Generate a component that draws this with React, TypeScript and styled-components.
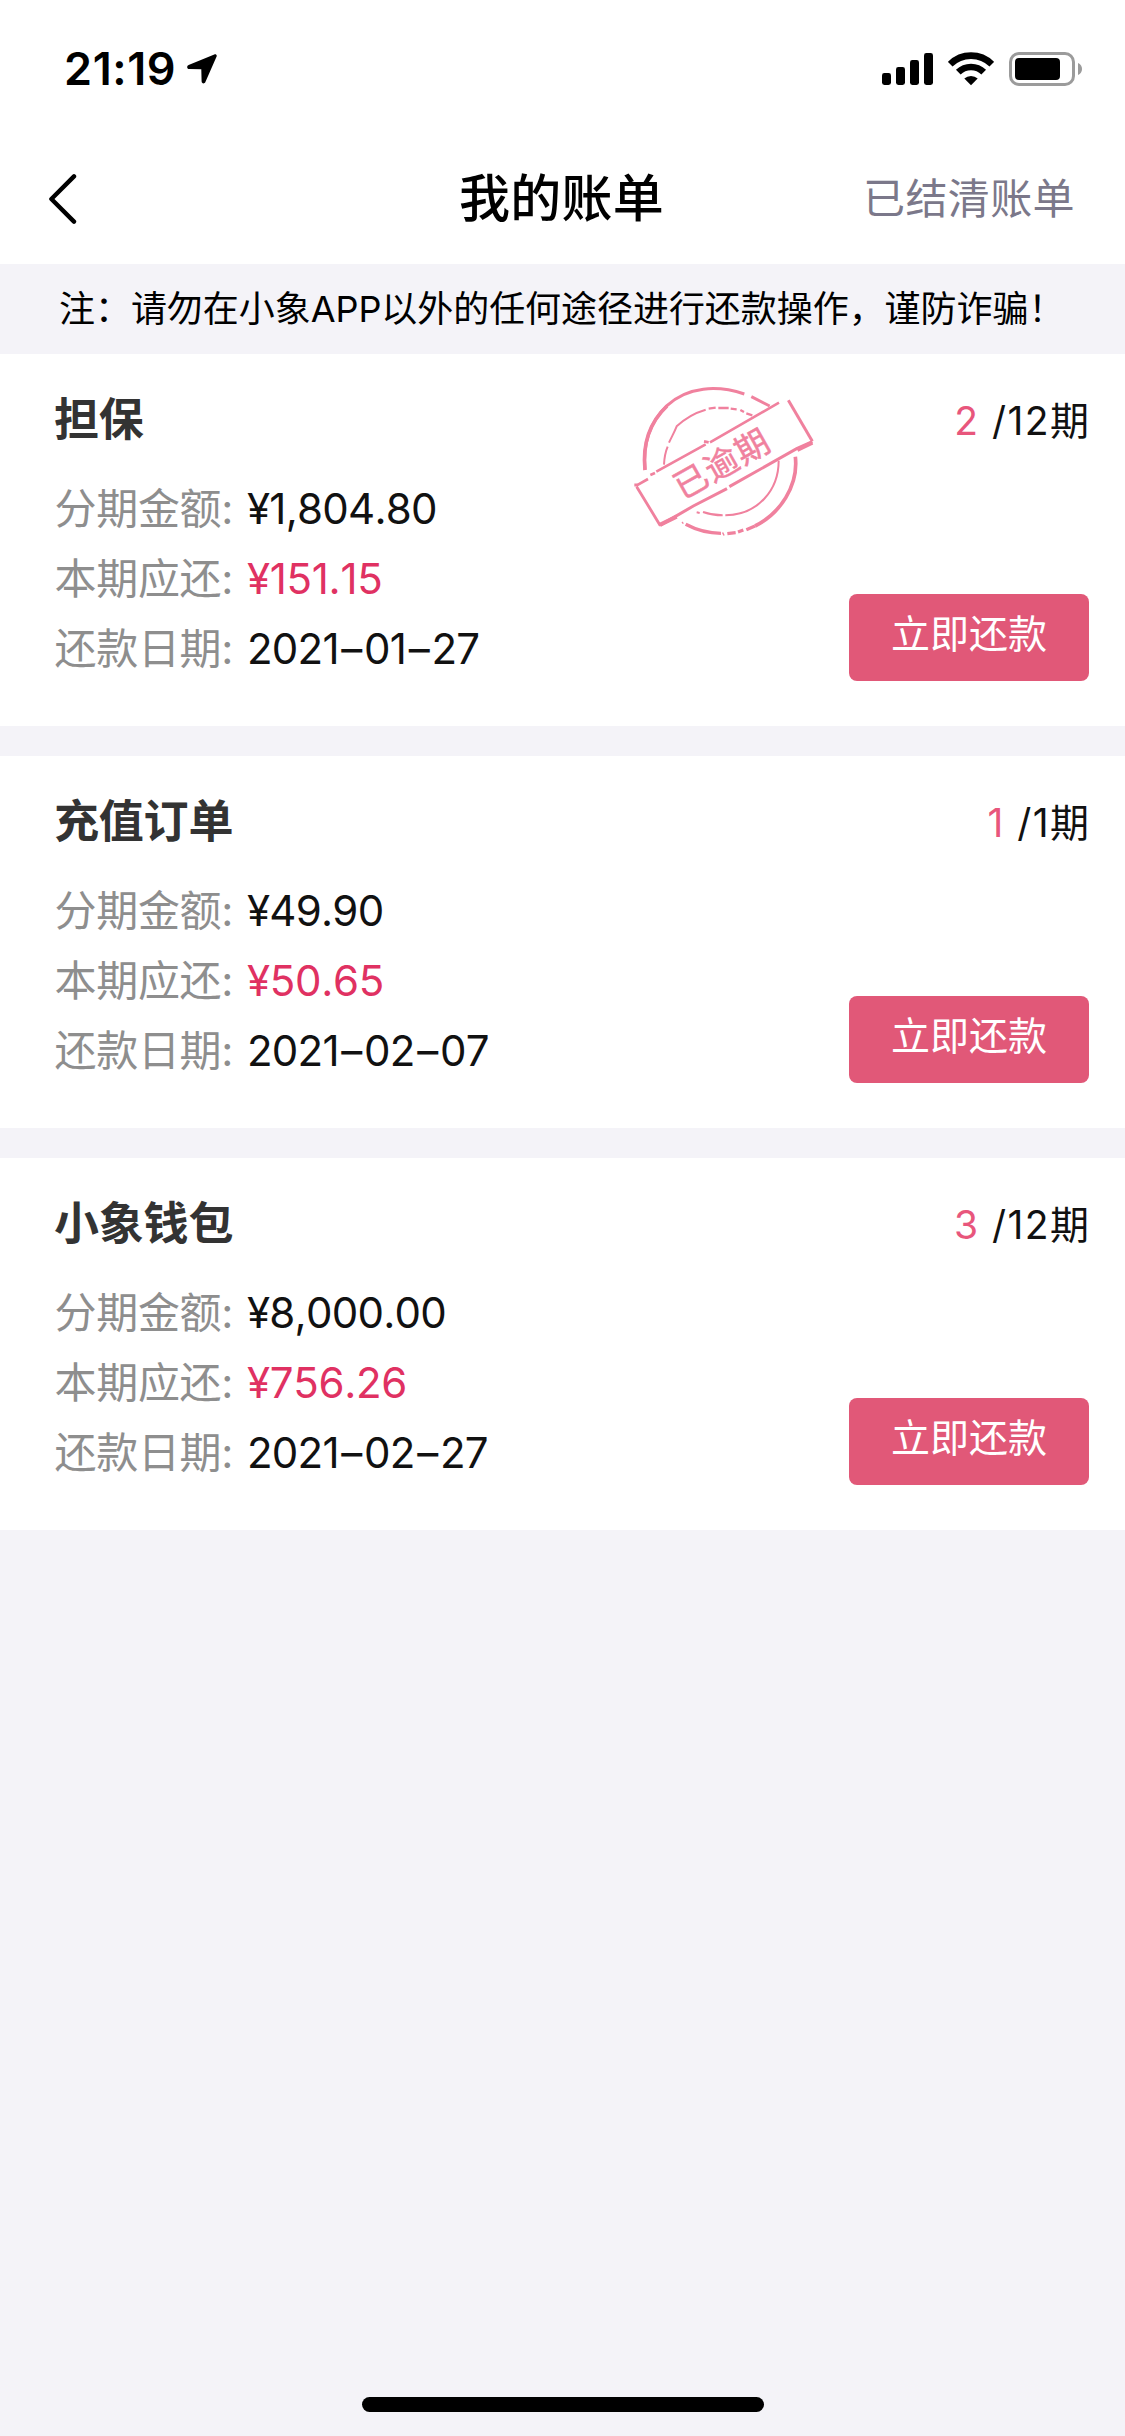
import React from "react";
import styled, { createGlobalStyle } from "styled-components";

const GlobalStyle = createGlobalStyle`
  * { box-sizing: border-box; }
  body {
    margin: 0;
    background: #f4f3f8;
    font-family: Inter, "Noto Sans CJK SC", sans-serif;
    color: #111;
  }
  button { font-family: inherit; border: 0; background: none; padding: 0; margin: 0; cursor: pointer; }
`;

const Screen = styled.div`
  width: 1125px;
  height: 2436px;
  display: flex;
  flex-direction: column;
  background: #f4f3f8;
  overflow: hidden;
  white-space: nowrap;
`;

const StatusBar = styled.div`
  height: 132px;
  padding: 5px 42px 0 64px;
  display: flex;
  align-items: center;
  justify-content: space-between;
  background: #fff;
`;

const Clock = styled.div`
  display: flex;
  align-items: center;
  gap: 11px;
  font-size: 45px;
  font-weight: 600;
  font-kerning: none;
  letter-spacing: 0.6px;
  color: #000;
`;

const StatusIcons = styled.div`
  display: flex;
  align-items: center;
  gap: 15px;
`;

const NavBar = styled.header`
  height: 132px;
  padding: 2px 50px 0 48px;
  display: grid;
  grid-template-columns: 1fr auto 1fr;
  align-items: center;
  background: #fff;
`;

const BackButton = styled.button`
  display: flex;
  justify-self: start;
`;

const PageTitle = styled.h1`
  margin: 0;
  font-size: 51px;
  font-weight: 500;
  line-height: 72px;
  letter-spacing: 0.3px;
  color: #000;
`;

const SettledLink = styled.button`
  justify-self: end;
  font-size: 42px;
  line-height: 60px;
  letter-spacing: 0.4px;
  color: #7b788a;
`;

const Notice = styled.div`
  height: 90px;
  padding-left: 59px;
  font-size: 36px;
  line-height: 90px;
  letter-spacing: -0.05px;
  color: #000;
`;

const BillList = styled.main`
  display: flex;
  flex-direction: column;
  gap: 30px;
`;

const Card = styled.section`
  position: relative;
  height: 372px;
  padding: 31px 36px 45px 54px;
  display: flex;
  justify-content: space-between;
  background: #fff;
`;

const Details = styled.div`
  display: flex;
  flex-direction: column;
`;

const CardTitle = styled.h2`
  margin: 0 0 19px;
  font-size: 45px;
  font-weight: 700;
  line-height: 70px;
  letter-spacing: -0.2px;
  color: #333;
`;

const Field = styled.div`
  display: flex;
  height: 70.5px;
  font-size: 42px;
  line-height: 70px;
`;

const FieldLabel = styled.span`
  width: 193px;
  padding-left: 0.5px;
  letter-spacing: -0.3px;
  color: #8e8e8e;
`;

const FieldValue = styled.span<{ $due?: boolean }>`
  font-kerning: none;
  letter-spacing: ${(p) => (p.$due ? "-0.3px" : "-0.75px")};
  color: ${(p) => (p.$due ? "#e03162" : "#111")};
`;

const DateDash = styled.span`
  margin: 0 2.5px;
`;

const Side = styled.div`
  display: flex;
  flex-direction: column;
  align-items: flex-end;
  justify-content: space-between;
`;

const Period = styled.div`
  display: flex;
  gap: 14px;
  font-size: 39px;
  font-kerning: none;
  line-height: 72px;
`;

const CurrentPeriod = styled.span`
  color: #e8567c;
`;

const TotalPeriods = styled.span`
  letter-spacing: 1.4px;
  margin-right: -1.4px;
`;

const PayButton = styled.button`
  width: 240px;
  height: 87px;
  padding-bottom: 7px;
  border-radius: 8px;
  background: #e15878;
  color: #fff;
  font-size: 39px;
  line-height: 80px;
`;

const StampArt = styled.svg`
  position: absolute;
  left: 620px;
  top: 16px;
  width: 210px;
  height: 180px;
  fill: none;
  stroke: #f0819e;
`;

const StampText = styled.text`
  font-family: "Noto Sans CJK SC", sans-serif;
  font-size: 101px;
  letter-spacing: 4px;
  text-anchor: middle;
  fill: #f0819e;
  stroke-width: 1.5px;
`;

const BottomArea = styled.footer`
  flex: 1;
  display: flex;
  justify-content: center;
  align-items: flex-end;
  padding-bottom: 24px;
`;

const HomeIndicator = styled.div`
  width: 402px;
  height: 15px;
  border-radius: 8px;
  background: #000;
`;

const LocationArrow = () => (
  <svg width="30" height="30" viewBox="0 0 30 30">
    <path d="M27.3 .4 1.6 11.1C-.5 12 -.2 15 2.2 15.1L14.3 15.3 14.6 27.3C14.7 29.8 17.4 30.2 18.4 28L29.6 2.6C30.2 1 28.9 -.2 27.3 .4Z" fill="#000" />
  </svg>
);

const Signal = () => (
  <svg width="51" height="34" viewBox="0 0 51 34">
    <rect x="0" y="21" width="9" height="12" rx="2.4" />
    <rect x="14" y="15" width="9" height="18" rx="2.4" />
    <rect x="28" y="8" width="9" height="25" rx="2.4" />
    <rect x="42" y="1" width="9" height="32" rx="2.4" />
  </svg>
);

const Wifi = () => (
  <svg width="46" height="34" viewBox="0 0 46 34">
    <g fill="none" stroke="#000" strokeWidth="6.6">
      <path d="M2.2 12.2A29.5 29.5 0 0 1 43.8 12.2" />
      <path d="M10.3 20.2A18 18 0 0 1 35.7 20.2" />
    </g>
    <path d="M23 33.2 16.3 26.6A9.6 9.6 0 0 1 29.7 26.6Z" />
  </svg>
);

const Battery = () => (
  <svg width="74" height="34" viewBox="0 0 74 34">
    <rect x="1.5" y="1.5" width="63" height="31" rx="8.5" fill="none" stroke="#9b9b9b" strokeWidth="3" />
    <rect x="6" y="6" width="45" height="22" rx="4" />
    <path d="M69 11C74.4 13.4 74.4 20.6 69 23Z" fill="#9b9b9b" />
  </svg>
);

const BackArrow = () => (
  <svg width="29" height="52" viewBox="0 0 29 52" fill="none" stroke="#000" strokeWidth="4.4" strokeLinecap="round" strokeLinejoin="round">
    <path d="M26 3.4 3.4 26 26 48.6" />
  </svg>
);

const OverdueStamp = () => (
  <StampArt viewBox="0 0 630 540">
    <path d="M75 300C68 222 88 158 141 107C203 49 292 45 373 72" strokeWidth="9" />
    <path d="M75 300C67 222 88 158 141 108" strokeWidth="11" />
    <path d="M394 80 449 108" strokeWidth="9" />
    <path d="M526 260C536 347 480 431 405 468" strokeWidth="11" />
    <path d="M405 468 379 479M370 480 354 486M347 488 322 491M312 491 308 493M303 490C266 490 229 480 197 463" strokeWidth="10" />
    <path d="M190 461 186 456" strokeWidth="4" />
    <path d="M132 284C133 262 137 244 143 230M147 218C154 202 163 187 170 169C194 146 223 129 257 119" strokeWidth="6" />
    <path d="M266 116 287 113M295 114 326 114M332 116 350 118M361 120 372 126M379 130 397 136" strokeWidth="7" />
    <path d="M476 272C476 358 416 434 316 436M308 436C286 436 266 432 249 426M239 429 230 427" strokeWidth="6" />
    <path d="M49 347 84 327M91 315 105 309M109 305 257 223M252 214 266 217M270 217 477 98" strokeWidth="8" />
    <path d="M505 91 577 214" strokeWidth="9" />
    <path d="M577 215 530 236 328 350M321 356 220 408 120 466" strokeWidth="9" />
    <path d="M577 218 532 240M170 440 121 464" strokeWidth="12" />
    <path d="M121 467 50 350M43 345 53 345" strokeWidth="8.5" />
    <StampText transform="translate(306 281) rotate(-29.5)" x="0" y="36">已逾期</StampText>
  </StampArt>
);

type Bill = {
  name: string;
  amount: string;
  due: string;
  date: [string, string, string];
  current: number;
  total: number;
  overdue?: boolean;
};

const bills: Bill[] = [
  { name: "担保", amount: "¥1,804.80", due: "¥151.15", date: ["2021", "01", "27"], current: 2, total: 12, overdue: true },
  { name: "充值订单", amount: "¥49.90", due: "¥50.65", date: ["2021", "02", "07"], current: 1, total: 1 },
  { name: "小象钱包", amount: "¥8,000.00", due: "¥756.26", date: ["2021", "02", "27"], current: 3, total: 12 },
];

const BillCard = ({ bill }: { bill: Bill }) => (
  <Card>
    <Details>
      <CardTitle>{bill.name}</CardTitle>
      <Field>
        <FieldLabel>分期金额:</FieldLabel>
        <FieldValue>{bill.amount}</FieldValue>
      </Field>
      <Field>
        <FieldLabel>本期应还:</FieldLabel>
        <FieldValue $due>{bill.due}</FieldValue>
      </Field>
      <Field>
        <FieldLabel>还款日期:</FieldLabel>
        <FieldValue>
          {bill.date[0]}
          <DateDash>–</DateDash>
          {bill.date[1]}
          <DateDash>–</DateDash>
          {bill.date[2]}
        </FieldValue>
      </Field>
    </Details>
    {bill.overdue && <OverdueStamp />}
    <Side>
      <Period>
        <CurrentPeriod>{bill.current}</CurrentPeriod>
        <TotalPeriods>/{bill.total}期</TotalPeriods>
      </Period>
      <PayButton>立即还款</PayButton>
    </Side>
  </Card>
);

export default function App() {
  return (
    <>
      <GlobalStyle />
      <Screen>
        <StatusBar>
          <Clock>
            <span>21:19</span>
            <LocationArrow />
          </Clock>
          <StatusIcons>
            <Signal />
            <Wifi />
            <Battery />
          </StatusIcons>
        </StatusBar>
        <NavBar>
          <BackButton aria-label="返回">
            <BackArrow />
          </BackButton>
          <PageTitle>我的账单</PageTitle>
          <SettledLink>已结清账单</SettledLink>
        </NavBar>
        <Notice>注：请勿在小象APP以外的任何途径进行还款操作，谨防诈骗！</Notice>
        <BillList>
          {bills.map((bill) => (
            <BillCard key={bill.name} bill={bill} />
          ))}
        </BillList>
        <BottomArea>
          <HomeIndicator />
        </BottomArea>
      </Screen>
    </>
  );
}
